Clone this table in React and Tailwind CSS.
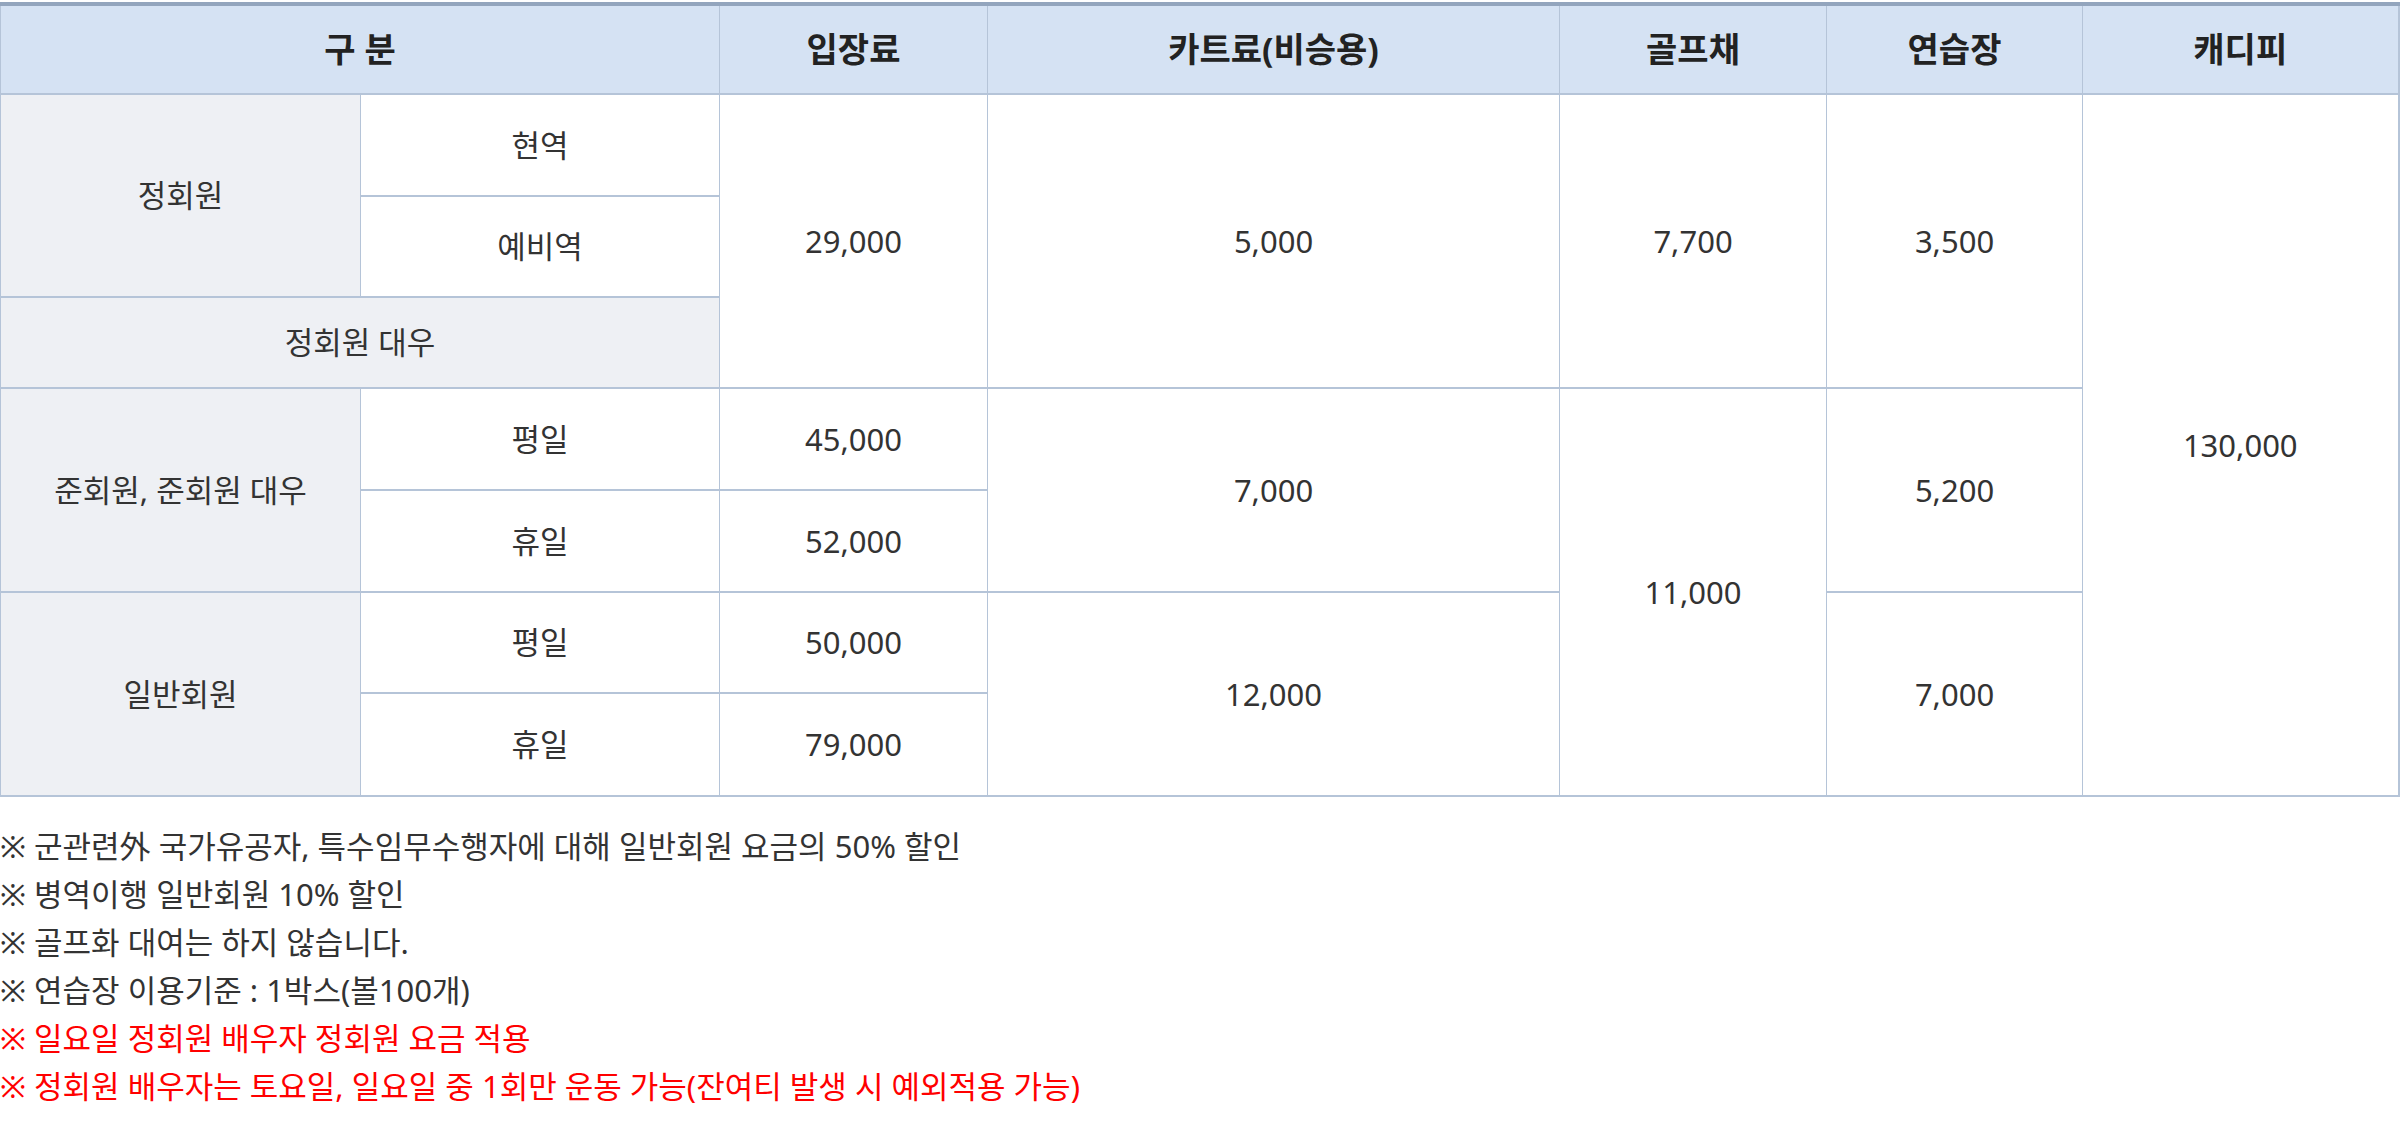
const cell = 'border-x border-y-2 border-[#b5c4d8] text-center align-middle';
const gray = 'bg-[#eef0f4]';
const head = `${cell} border-t-4 border-t-[#93a5bd]`;

const NOTES = [
  { text: '※ 군관련外 국가유공자, 특수임무수행자에 대해 일반회원 요금의 50% 할인' },
  { text: '※ 병역이행 일반회원 10% 할인' },
  { text: '※ 골프화 대여는 하지 않습니다.' },
  { text: '※ 연습장 이용기준 : 1박스(볼100개)' },
  { text: '※ 일요일 정회원 배우자 정회원 요금 적용', red: true },
  { text: '※ 정회원 배우자는 토요일, 일요일 중 1회만 운동 가능(잔여티 발생 시 예외적용 가능)', red: true },
];

export default function App() {
  return (
    <div className="w-[2404px] min-h-[1130px] bg-white pt-[2px] font-['Noto_Sans','Noto_Sans_CJK_KR',sans-serif] text-[#333]">
      <table className="w-[2398px] table-fixed border-collapse text-[31px]">
        <colgroup>
          <col className="w-[360px]" />
          <col className="w-[359px]" />
          <col className="w-[268px]" />
          <col className="w-[572px]" />
          <col className="w-[267px]" />
          <col className="w-[256px]" />
          <col className="w-[316px]" />
        </colgroup>
        <thead>
          <tr className="h-[90px] bg-[#d5e2f3] text-[#222] text-[34px] font-bold">
            <th colSpan={2} className={head}>구 분</th>
            <th className={head}>입장료</th>
            <th className={head}>카트료(비승용)</th>
            <th className={head}>골프채</th>
            <th className={head}>연습장</th>
            <th className={`${head} border-r-2`}>캐디피</th>
          </tr>
        </thead>
        <tbody>
          <tr className="h-[102px]">
            <td rowSpan={2} className={`${cell} ${gray}`}>정회원</td>
            <td className={cell}>현역</td>
            <td rowSpan={3} className={cell}>29,000</td>
            <td rowSpan={3} className={cell}>5,000</td>
            <td rowSpan={3} className={cell}>7,700</td>
            <td rowSpan={3} className={cell}>3,500</td>
            <td rowSpan={7} className={`${cell} border-r-2`}>130,000</td>
          </tr>
          <tr className="h-[101px]">
            <td className={cell}>예비역</td>
          </tr>
          <tr className="h-[91px]">
            <td colSpan={2} className={`${cell} ${gray}`}>정회원 대우</td>
          </tr>
          <tr className="h-[102px]">
            <td rowSpan={2} className={`${cell} ${gray}`}>준회원, 준회원 대우</td>
            <td className={cell}>평일</td>
            <td className={cell}>45,000</td>
            <td rowSpan={2} className={cell}>7,000</td>
            <td rowSpan={4} className={cell}>11,000</td>
            <td rowSpan={2} className={cell}>5,200</td>
          </tr>
          <tr className="h-[102px]">
            <td className={cell}>휴일</td>
            <td className={cell}>52,000</td>
          </tr>
          <tr className="h-[101px]">
            <td rowSpan={2} className={`${cell} ${gray}`}>일반회원</td>
            <td className={cell}>평일</td>
            <td className={cell}>50,000</td>
            <td rowSpan={2} className={cell}>12,000</td>
            <td rowSpan={2} className={cell}>7,000</td>
          </tr>
          <tr className="h-[103px]">
            <td className={cell}>휴일</td>
            <td className={cell}>79,000</td>
          </tr>
        </tbody>
      </table>

      <ul className="mt-[25px] text-[31px] leading-[48px]">
        {NOTES.map((n, i) => (
          <li key={i} className={n.red ? 'text-[#ff0000]' : ''}>
            {n.text}
          </li>
        ))}
      </ul>
    </div>
  );
}
